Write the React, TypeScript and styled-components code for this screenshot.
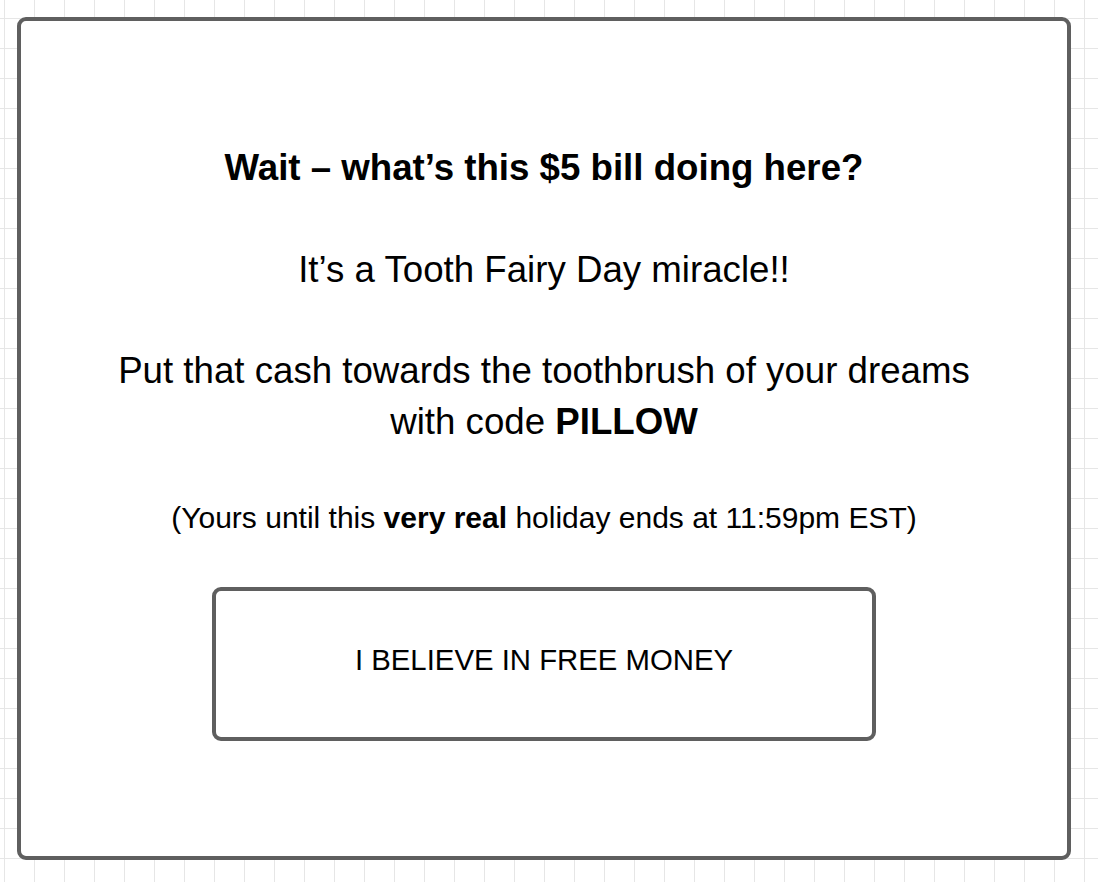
import React from "react";
import styled, { createGlobalStyle } from "styled-components";

const GlobalStyle = createGlobalStyle`
  html, body {
    margin: 0;
    padding: 0;
  }
  body {
    width: 1098px;
    height: 882px;
    overflow: hidden;
    background-color: #ffffff;
    background-image:
      linear-gradient(to right, #e6e6e6 1px, transparent 1px),
      linear-gradient(to bottom, #e6e6e6 1px, transparent 1px);
    background-size: 30px 30px;
    background-position: 4px 18px;
    font-family: "Liberation Sans", Arial, sans-serif;
    color: #000;
  }
`;

const Card = styled.div`
  box-sizing: border-box;
  margin: 17px 0 0 17px;
  width: 1054px;
  height: 843px;
  border: 4px solid #5f5f5f;
  border-radius: 9px;
  background: #ffffff;
  display: flex;
  flex-direction: column;
  align-items: center;
  padding-top: 127px;
  text-align: center;
`;

const Heading = styled.h1`
  margin: 0;
  font-size: 27.5pt;
  line-height: 40px;
  font-weight: 700;
`;

const Para = styled.p<{ $top: number }>`
  margin: ${(p) => p.$top}px 0 0;
  font-size: 27.5pt;
  line-height: 51px;
  font-weight: 400;
`;

const Note = styled.p`
  margin: 53px 0 0;
  font-size: 22.5pt;
  line-height: 36px;
`;

const Button = styled.button`
  box-sizing: border-box;
  margin-top: 51px;
  width: 664px;
  height: 154px;
  border: 4px solid #5f5f5f;
  border-radius: 9px;
  background: #ffffff;
  font-family: "Liberation Sans", Arial, sans-serif;
  font-size: 22pt;
  color: #000;
  cursor: pointer;
  padding: 0 0 8px;
`;

export default function App() {
  return (
    <>
      <GlobalStyle />
      <Card>
        <Heading>Wait – what’s this $5 bill doing here?</Heading>
        <Para $top={56}>It’s a Tooth Fairy Day miracle!!</Para>
        <Para $top={50}>
          Put that cash towards the toothbrush of your dreams
          <br />
          with code <b>PILLOW</b>
        </Para>
        <Note>
          (Yours until this <b>very real</b> holiday ends at 11:59pm EST)
        </Note>
        <Button>I BELIEVE IN FREE MONEY</Button>
      </Card>
    </>
  );
}
